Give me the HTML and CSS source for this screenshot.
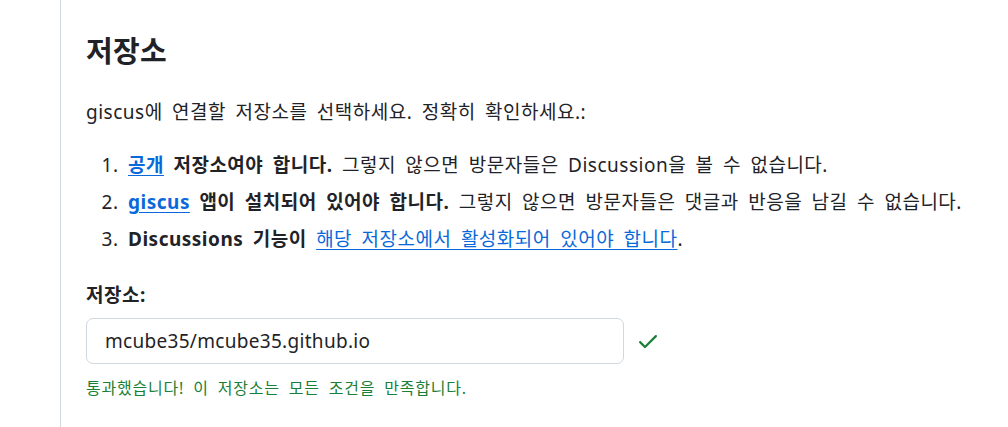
FILE: index.html
```html
<!DOCTYPE html>
<html lang="ko">
<head>
<meta charset="utf-8">
<link rel="stylesheet" href="styles.css">
</head>
<body>
<div class="page">
  <div class="rail"></div>
  <main class="content">
    <h2 class="title">저장소</h2>
    <p class="intro">giscus에 연결할 저장소를 선택하세요. 정확히 확인하세요.:</p>
    <ol class="reqs">
      <li><a href="#">공개</a> <strong>저장소여야 합니다.</strong> 그렇지 않으면 방문자들은 Discussion을 볼 수 없습니다.</li>
      <li><a href="#">giscus</a> <strong>앱이 설치되어 있어야 합니다.</strong> 그렇지 않으면 방문자들은 댓글과 반응을 남길 수 없습니다.</li>
      <li><strong>Discussions 기능이</strong> <a href="#">해당 저장소에서 활성화되어 있어야 합니다</a>.</li>
    </ol>
    <label class="label" for="repo">저장소:</label>
    <div class="field-row">
      <input id="repo" class="input" type="text" value="mcube35/mcube35.github.io">
      <svg class="check" width="24" height="24" viewBox="0 0 16 16" aria-hidden="true"><path fill="currentColor" d="M13.78 4.22a.75.75 0 0 1 0 1.06l-7.25 7.25a.75.75 0 0 1-1.06 0L2.22 9.28a.751.751 0 0 1 .018-1.042.751.751 0 0 1 1.042-.018L6 10.94l6.72-6.72a.75.75 0 0 1 1.06 0Z"/></svg>
    </div>
    <p class="ok">통과했습니다! 이 저장소는 모든 조건을 만족합니다.</p>
  </main>
</div>
</body>
</html>
```
FILE: styles.css
```css
html, body {
  margin: 0;
  padding: 0;
  background: #ffffff;
}
body {
  font-family: "Noto Sans", "Noto Sans CJK KR", sans-serif;
  color: #1f2328;
  font-size: 19px;
  letter-spacing: 0.5px;
  word-spacing: 4px;
}
.page {
  display: flex;
  min-height: 427px;
}
.rail {
  margin-left: 60px;
  width: 1px;
  background: #d0d7de;
}
.content {
  padding: 31px 0 0 25px;
  flex: 1;
}
.title {
  margin: 0;
  font-size: 29px;
  font-weight: 700;
  line-height: 40px;
  letter-spacing: 0.3px;
  word-spacing: 0;
}
.intro {
  margin: 27px 0 0;
  line-height: 28px;
}
.reqs {
  margin: 25px 0 0;
  padding-left: 42px;
}
.reqs li {
  line-height: 28px;
  margin-bottom: 9px;
}
.reqs li:last-child {
  margin-bottom: 0;
}
.reqs a {
  color: #0969da;
  text-decoration: underline;
  text-underline-offset: 3px;
}
.reqs li > a:first-child {
  font-weight: 700;
}
.label {
  display: block;
  margin-top: 28px;
  font-weight: 700;
  line-height: 28px;
}
.field-row {
  display: flex;
  align-items: center;
  gap: 12px;
  margin-top: 9px;
}
.input {
  box-sizing: border-box;
  width: 538px;
  height: 46px;
  padding: 0 18px;
  border: 1px solid #d0d7de;
  border-radius: 7px;
  font: inherit;
  font-size: 19px;
  letter-spacing: 0.3px;
  color: #1f2328;
  outline: none;
}
.check {
  color: #1a7f37;
}
.ok {
  margin: 12px 0 0;
  font-size: 16px;
  color: #1a7f37;
  line-height: 24px;
  letter-spacing: 0.8px;
  word-spacing: 4px;
}
```
